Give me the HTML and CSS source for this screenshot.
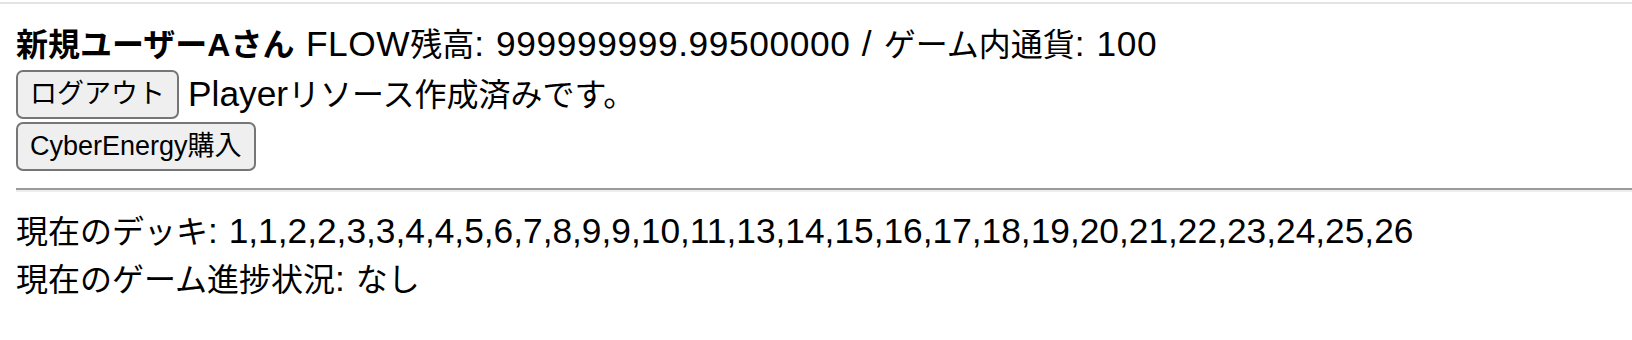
FILE: index.html
```html
<!DOCTYPE html>
<html lang="ja">
<head>
<meta charset="utf-8">
<title>Game</title>
<link rel="stylesheet" href="styles.css">
</head>
<body>
<div class="topbar"></div>
<main class="page">
  <div class="line"><b>新規ユーザーAさん</b><span class="lt wide"> FLOW</span>残高<span class="lt wide">: 999999999.99500000 / </span>ゲーム内通貨<span class="lt wide">: 100</span></div>
  <div class="row row-first">
    <button class="btn" type="button">ログアウト</button>
    <span><span class="lt">Player</span>リソース作成済みです。</span>
  </div>
  <div class="row">
    <button class="btn" type="button">CyberEnergy購入</button>
  </div>
  <hr class="rule">
  <div class="line">現在のデッキ<span class="lt">: 1,1,2,2,3,3,4,4,5,6,7,8,9,9,10,11,13,14,15,16,17,18,19,20,21,22,23,24,25,26</span></div>
  <div class="line">現在のゲーム進捗状況<span class="lt">: </span>なし</div>
</main>
</body>
</html>
```
FILE: styles.css
```css
html, body {
  margin: 0;
  padding: 0;
  background: #ffffff;
}

body {
  font-family: "Liberation Sans", "Noto Sans CJK JP", sans-serif;
  font-size: 32px;
  color: #000000;
}

.topbar {
  margin-top: 2px;
  height: 2px;
  background: #e3e3e3;
}

.page {
  padding: 16px 0 0 16px;
}

.line {
  height: 48px;
  line-height: 48px;
  white-space: nowrap;
}

.line b {
  font-weight: bold;
}

.lt {
  font-size: 35.3px;
  word-spacing: 1px;
}

.lt.wide {
  letter-spacing: 0.6px;
}

.row {
  display: flex;
  align-items: center;
  gap: 9px;
  height: 52px;
  line-height: 48px;
  white-space: nowrap;
}

.btn {
  font-family: "Liberation Sans", "Noto Sans CJK JP", sans-serif;
  font-size: 27px;
  line-height: 40px;
  height: 49px;
  padding: 2px 12px;
  margin: 0;
  color: #000000;
  background: #efefef;
  border: 2px solid #767676;
  border-radius: 7px;
}

.rule {
  margin: 16px 0 15px 0;
  border: 0;
  border-top: 2px solid #9a9a9a;
  border-bottom: 2px solid #eeeeee;
  height: 0;
}
```
